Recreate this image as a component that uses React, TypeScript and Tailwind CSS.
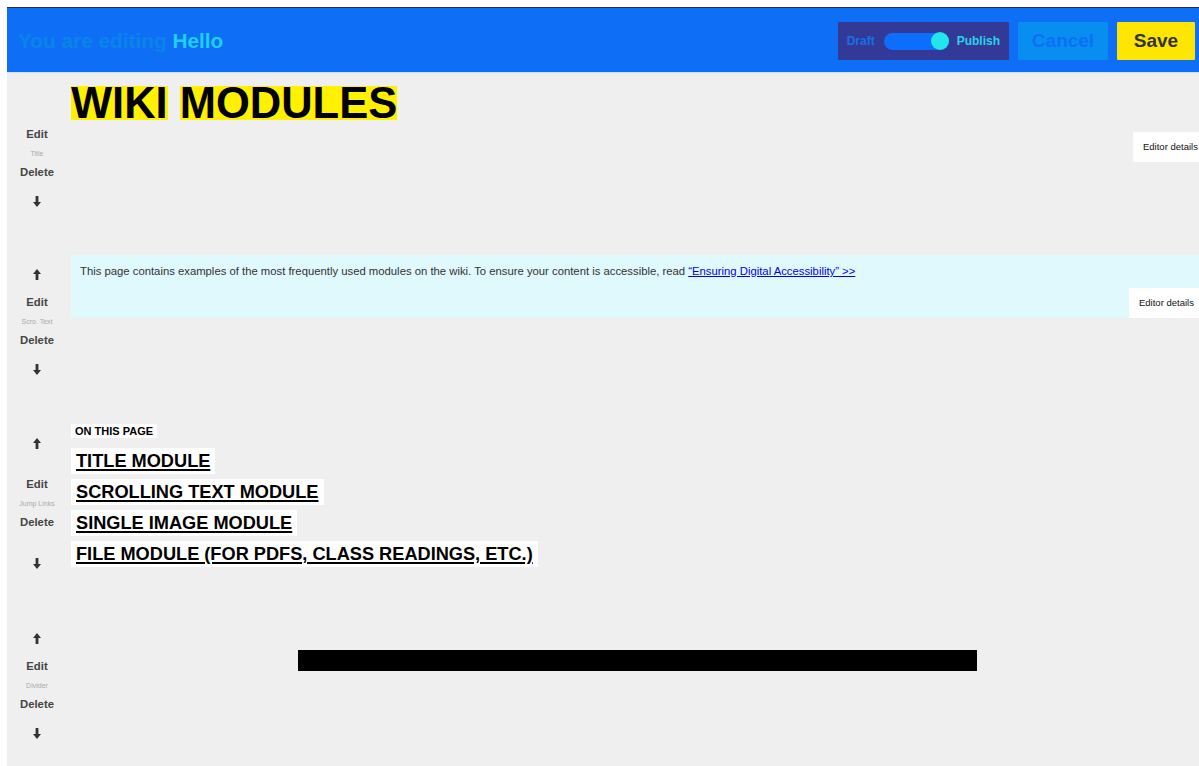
import React from "react";

function ArrowUp() {
  return (
    <svg width="8" height="11" viewBox="0 0 8 11" className="block">
      <path d="M4 0 L8 5 L5.4 5 L5.4 11 L2.6 11 L2.6 5 L0 5 Z" fill="#333" />
    </svg>
  );
}

function ArrowDown() {
  return (
    <svg width="8" height="11" viewBox="0 0 8 11" className="block">
      <path d="M4 11 L8 6 L5.4 6 L5.4 0 L2.6 0 L2.6 6 L0 6 Z" fill="#333" />
    </svg>
  );
}

function Controls({ label, first = false }: { label: string; first?: boolean }) {
  return (
    <div className="w-[60px] shrink-0 self-stretch pt-[12px] flex flex-col justify-between items-center">
      <div className={`h-[14px] flex items-center justify-center ${first ? "invisible" : ""}`}>
        <ArrowUp />
      </div>
      <div className="my-[12px] flex flex-col items-center">
        <div className="h-[19px] leading-[19px] text-[11.3px] font-bold text-[#444]">Edit</div>
        <div className="h-[19px] leading-[19px] text-[7px] text-[#aaa]">{label}</div>
        <div className="h-[19px] leading-[19px] text-[11.3px] font-bold text-[#444]">Delete</div>
      </div>
      <div className="h-[14px] flex items-center justify-center">
        <ArrowDown />
      </div>
    </div>
  );
}

function EditorDetails({ width }: { width: string }) {
  return (
    <div
      className={`absolute right-0 bottom-0 h-[30px] ${width} overflow-hidden whitespace-nowrap bg-white pl-[10px] text-[9.5px] leading-[30px] text-[#111]`}
    >
      Editor details
    </div>
  );
}

export default function App() {
  const links = [
    "TITLE MODULE",
    "SCROLLING TEXT MODULE",
    "SINGLE IMAGE MODULE",
    "FILE MODULE (FOR PDFS, CLASS READINGS, ETC.)",
  ];

  return (
    <div className="min-h-[766px] bg-white pl-[7px] pt-[7px] font-['Liberation_Sans',Arial,sans-serif]">
      <div className="min-h-[759px] bg-[#efefef] flex flex-col">
        {/* editing toolbar */}
        <header className="h-[66px] shrink-0 border-t border-t-[#2b2f36] border-b border-b-[#cfe1f8] bg-[#0e6ff6] flex items-center justify-between pl-[11px] pr-[4px]">
          <div className="text-[20.8px] font-bold pt-[1px]">
            <span className="text-[#0a84ea]">You are editing </span>
            <span className="text-[#1bd0f2]">Hello</span>
          </div>
          <div className="mt-[2px] flex items-center gap-[9px]">
            <div className="h-[38px] bg-[#323996] px-[9px] flex items-center rounded-[1px]">
              <span className="text-[12px] font-bold text-[#1a6ee8]">Draft</span>
              <div className="ml-[9px] mr-[8px] relative w-[65px] h-[17px] rounded-full bg-[#0d6efd]">
                <div className="absolute right-0 top-[-0.5px] w-[18px] h-[18px] rounded-full bg-[#21e6ec]" />
              </div>
              <span className="text-[12px] font-bold text-[#2bd3ea]">Publish</span>
            </div>
            <div className="h-[38px] w-[90px] bg-[#088ef0] flex items-center justify-center text-[19px] font-bold text-[#0e6ff6] rounded-[1px]">
              Cancel
            </div>
            <div className="h-[38px] w-[78px] bg-[#ffe600] flex items-center justify-center text-[19px] font-bold text-[#333] rounded-[1px]">
              Save
            </div>
          </div>
        </header>

        <main className="pt-[14px] flex flex-col">
          {/* title module */}
          <div className="flex items-start">
            <Controls label="Title" first />
            <div className="relative ml-[4px] flex-1 h-[75px]">
              <h1 className="-mt-[1px] flex gap-[12px] text-[43.5px] font-bold text-black">
                <span className="block h-[34px] leading-[34px] bg-[#fff100]">WIKI</span>
                <span className="block h-[34px] leading-[34px] bg-[#fff100]">MODULES</span>
              </h1>
              <EditorDetails width="w-[66px]" />
            </div>
          </div>

          {/* scrolling text module */}
          <div className="mt-[47px] flex items-start">
            <Controls label="Scro. Text" />
            <div className="relative ml-[4px] flex-1 h-[63px] bg-[#e0f9fd] pl-[9px] pt-[8px]">
              <p className="text-[11.3px] leading-[16px] text-[#333]">
                This page contains examples of the most frequently used modules on the wiki. To ensure your content is accessible, read{" "}
                <a className="text-[#0000ee] underline" href="#">
                  “Ensuring Digital Accessibility” &gt;&gt;
                </a>
              </p>
              <EditorDetails width="w-[70px]" />
            </div>
          </div>

          {/* jump links module */}
          <div className="mt-[48px] flex items-start">
            <Controls label="Jump Links" />
            <div className="ml-[4px] flex-1 pb-[3px] flex flex-col items-start">
              <div className="h-[14px] bg-white px-[4px] text-[11px] font-bold leading-[14px] text-black">
                ON THIS PAGE
              </div>
              <div className="mt-[10px] flex flex-col items-start gap-[5px]">
                {links.map((l) => (
                  <div
                    key={l}
                    className="h-[26px] bg-white px-[5px] text-[18.2px] font-bold leading-[26px] text-black underline decoration-[2px] underline-offset-[2px]"
                  >
                    {l}
                  </div>
                ))}
              </div>
            </div>
          </div>

          {/* divider module */}
          <div className="mt-[49px] flex items-start">
            <Controls label="Divider" />
            <div className="ml-[4px] flex-1 pt-[31px]">
              <div className="ml-[227px] w-[679px] h-[21px] bg-black" />
            </div>
          </div>
        </main>
      </div>
    </div>
  );
}
